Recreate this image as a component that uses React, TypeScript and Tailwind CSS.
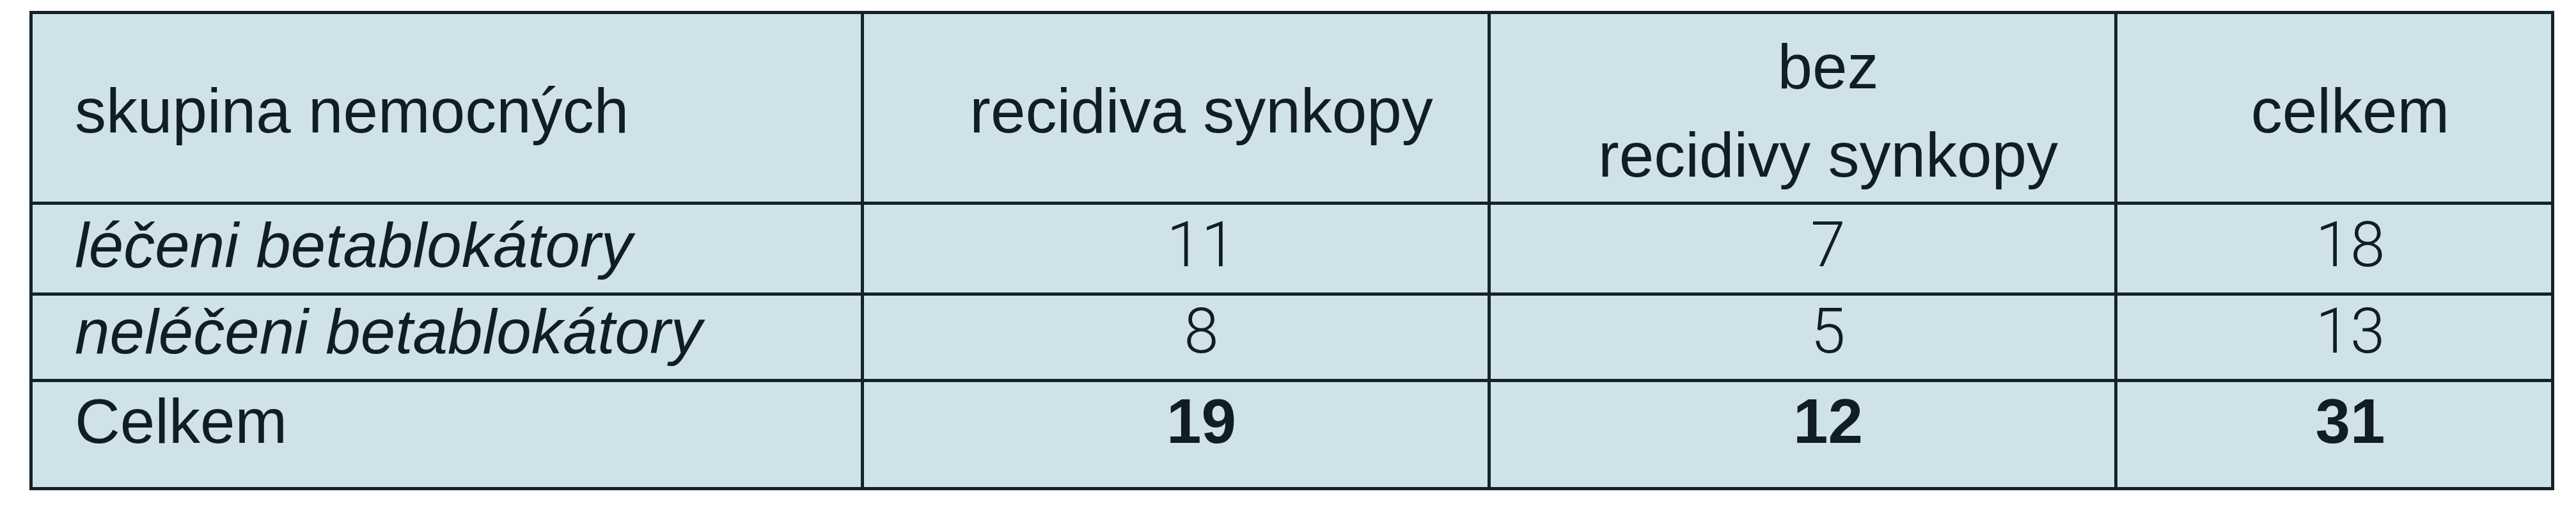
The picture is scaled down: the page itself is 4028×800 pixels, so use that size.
import { Fragment } from 'react';

const rows = [
  { label: 'léčeni betablokátory', values: ['11', '7', '18'], top: 'pt-[7px]' },
  { label: 'neléčeni betablokátory', values: ['8', '5', '13'], top: 'pt-0' },
];

const totals = ['19', '12', '31'];

// column offsets: the numbers sit right of the cell centre in the source table
const colPad = ['pl-[80px]', 'pl-[80px]', 'pl-[50px]'];

export default function App() {
  return (
    <div className="min-h-screen w-full bg-white pl-[46px] pt-[17px] font-['Liberation_Sans',Arial,sans-serif] text-[98px] text-[#101d25]">
      <div className="grid w-[3948px] grid-cols-[1295px_975px_975px_678px] grid-rows-[293px_137px_130px_164px] gap-[5px] bg-[#13222b] p-[5px]">
        {/* header */}
        <div className="flex items-start bg-[#cfe1e9] pl-[66px] pt-[82px] leading-[138px]">
          skupina nemocných
        </div>
        <div className="flex items-start justify-center bg-[#cfe1e9] pl-[80px] pt-[82px] leading-[138px]">
          recidiva synkopy
        </div>
        <div className="flex items-start justify-center bg-[#cfe1e9] pl-[80px] pt-[13px] text-center leading-[138px]">
          bez
          <br />
          recidivy synkopy
        </div>
        <div className="flex items-start justify-center bg-[#cfe1e9] pl-[50px] pt-[82px] leading-[138px]">
          celkem
        </div>

        {rows.map((row) => (
          <Fragment key={row.label}>
            <div
              className={`flex items-start bg-[#cfe1e9] pl-[66px] leading-[112px] italic ${row.top}`}
            >
              {row.label}
            </div>
            {row.values.map((v, i) => (
              <div
                key={i}
                className={`flex items-start justify-center bg-[#cfe1e9] font-['Roboto',sans-serif] font-light leading-[112px] ${colPad[i]} ${row.top}`}
              >
                {v}
              </div>
            ))}
          </Fragment>
        ))}

        {/* totals */}
        <div className="flex items-start bg-[#cfe1e9] pl-[66px] pt-[5px] leading-[112px]">
          Celkem
        </div>
        {totals.map((v, i) => (
          <div
            key={'t' + i}
            className={`flex items-start justify-center bg-[#cfe1e9] pt-[5px] font-bold leading-[112px] ${colPad[i]}`}
          >
            {v}
          </div>
        ))}
      </div>
    </div>
  );
}
